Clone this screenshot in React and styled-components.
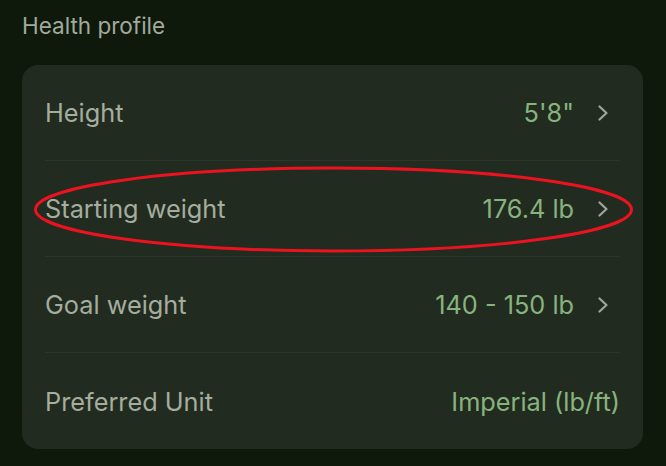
import styled, { createGlobalStyle } from "styled-components"

const Global = createGlobalStyle`
  html, body { margin: 0; padding: 0; background: #0e190c; }
  body { font-family: Inter, "Noto Sans", sans-serif; -webkit-font-smoothing: antialiased; }
`

const Page = styled.div`
  position: relative;
  width: 666px;
  height: 466px;
  padding: 11px 23px 0 22px;
  box-sizing: border-box;
`

const Title = styled.h2`
  margin: 0 0 24px;
  font-size: 22.5px;
  line-height: 30px;
  font-weight: 400;
  color: #a2aa9c;
`

const Card = styled.div`
  background: #222b1f;
  border-radius: 16px;
  padding: 0 23px;
`

const Row = styled.div`
  display: flex;
  align-items: center;
  justify-content: space-between;
  box-sizing: border-box;
  height: 96px;
  border-bottom: ${p => (p.$last ? "none" : "1px solid #2d3729")};
`

const Label = styled.span`
  font-size: 25.3px;
  color: #a4ad9e;
`

const Value = styled.span`
  display: flex;
  align-items: center;
  gap: 23px;
  font-size: 25.3px;
  color: #87b47e;
  padding-right: ${p => (p.$chevron ? "11px" : "0")};
`

const Ring = styled.svg`
  position: absolute;
  left: 0;
  top: 0;
  pointer-events: none;
`

function Chevron() {
  return (
    <svg width="12" height="16" viewBox="0 0 12 16">
      <path d="M2.5 1.5 L9.5 8 L2.5 14.5" fill="none" stroke="#a3a3a0" strokeWidth="2.2" strokeLinecap="round" strokeLinejoin="round" />
    </svg>
  )
}

const rows = [
  { label: "Height", value: "5'8\"", chevron: true },
  { label: "Starting weight", value: "176.4 lb", chevron: true },
  { label: "Goal weight", value: "140 - 150 lb", chevron: true },
  { label: "Preferred Unit", value: "Imperial (lb/ft)", chevron: false },
]

export default function App() {
  return (
    <Page>
      <Global />
      <Title>Health profile</Title>
      <Card>
        {rows.map((r, i) => (
          <Row key={r.label} $last={i === rows.length - 1}>
            <Label>{r.label}</Label>
            <Value $chevron={r.chevron}>
              {r.value}
              {r.chevron && <Chevron />}
            </Value>
          </Row>
        ))}
      </Card>
      <Ring width="666" height="466">
        <ellipse cx="333.5" cy="209.5" rx="298" ry="41.5" fill="none" stroke="#ec1320" strokeWidth="3" />
      </Ring>
    </Page>
  )
}
